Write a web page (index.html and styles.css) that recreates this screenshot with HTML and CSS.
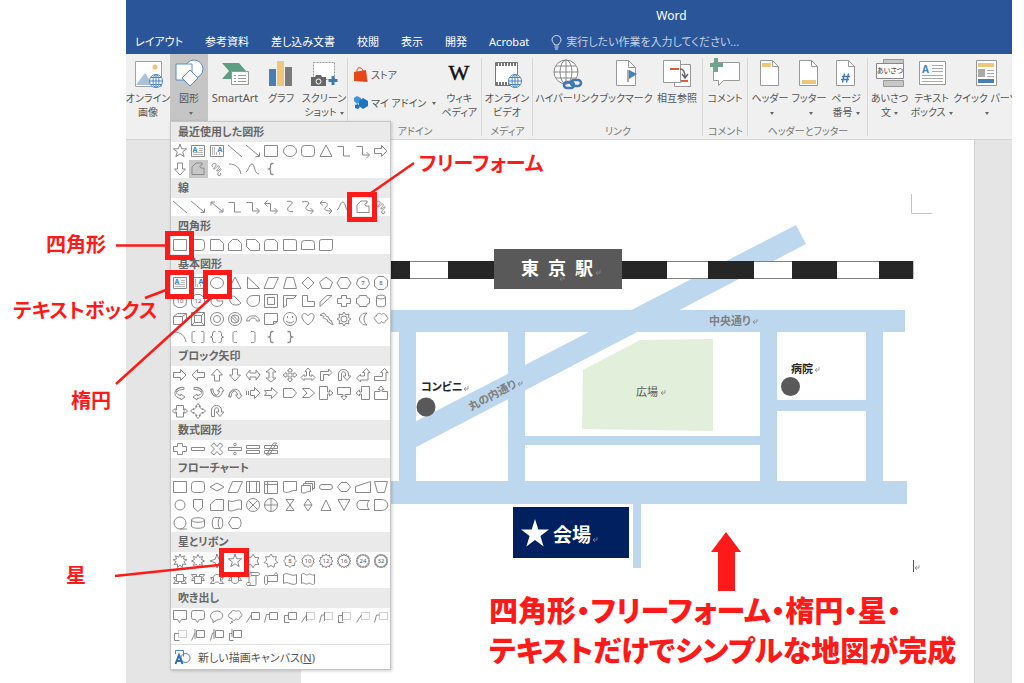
FILE: index.html
```html
<!DOCTYPE html>
<html lang="ja">
<head>
    <meta charset="UTF-8">
    <meta name="viewport" content="width=device-width, initial-scale=1.0">
    <title>Word</title>
    <link rel="stylesheet" href="styles.css">
</head>
<body>
    <div class="stage">
        <div class="word">
            <header class="titlebar">
                <div class="title">Word</div>
                <nav class="tabs">
                    <button class="tab">レイアウト</button>
                    <button class="tab">参考資料</button>
                    <button class="tab">差し込み文書</button>
                    <button class="tab">校閲</button>
                    <button class="tab">表示</button>
                    <button class="tab">開発</button>
                    <button class="tab">Acrobat</button>
                    <button class="tab tell-me">
                        <svg width="11" height="15" viewBox="0 0 11 15" fill="none" stroke="#dfe8f5"><path d="M3.5 10C3.5 8 1 7.500 1 4.800a4.500 4.300 0 0 1 9 0C10 7.500 7.500 8 7.500 10zM3.500 12h4M4 14h3"/></svg>
                        <span>実行したい作業を入力してください...</span>
                    </button>
                </nav>
            </header>

            <div class="ribbon">
                <section class="group">
                    <div class="tools">
                        <button class="tool w44">
                            <svg width="32" height="32" viewBox="0 0 32 32"><path d="M3.500 3.500h26v25h-26z" fill="#fff" stroke="#a0a0a0"/><circle cx="23" cy="9" r="2.500" fill="#eec07c"/><path d="M4 27l9-12 8 12z" fill="#a9c2da"/><g fill="#fff" stroke="#4a86c0"><circle cx="24" cy="23" r="6.500"/><ellipse cx="24" cy="23" rx="3" ry="6.500"/><path d="M17.500 23h13M19 19.500h10M19 26.500h10M24 16.500v13"/></g></svg>
                            <span>オンライン<br>画像</span>
                        </button>
                        <button class="tool w38 open">
                            <svg width="32" height="32" viewBox="0 0 32 32" fill="#fff" stroke="#5b8dc4"><circle cx="21" cy="11" r="9"/><path d="M3 6h16v16H3z"/><path d="M17 12l8 8-8 8-8-8z"/></svg>
                            <span>図形<br><i class="caret"></i></span>
                        </button>
                        <button class="tool w54">
                            <svg width="32" height="32" viewBox="0 0 32 32"><path d="M3 5h17l7 8-7 8H3l7-8z" fill="#5e9c84"/><path d="M12.500 13.500h17v13h-17z" fill="#fff" stroke="#999"/><path d="M15 17.500h2m2 0h8m-12 3h2m2 0h8m-12 3h2m2 0h8" stroke="#999"/></svg>
                            <span class="latin">SmartArt</span>
                        </button>
                        <button class="tool w38">
                            <svg width="32" height="32" viewBox="0 0 32 32"><path d="M4 11h7v17H4z" fill="#4a7fb5"/><path d="M12 3h7v25h-7z" fill="#efc77b"/><path d="M20 9h7v19h-7z" fill="#7b7b7b"/></svg>
                            <span>グラフ</span>
                        </button>
                        <button class="tool w48">
                            <svg width="32" height="32" viewBox="0 0 32 32"><path d="M5.500 4.500h21v17h-21z" fill="#fff" stroke="#999" stroke-dasharray="2 1"/><path d="M3 19h4l1-2h5l1 2h4v9H3z" fill="#666"/><circle cx="10.500" cy="23.500" r="2.500" fill="#666" stroke="#fff"/><path d="M25 18v9m-4.500-4.500h9" stroke="#3f78b5" stroke-width="3"/></svg>
                            <span>スクリーン<br>ショット<i class="caret"></i></span>
                        </button>
                    </div>
                    <div class="group-label"></div>
                </section>

                <section class="group">
                    <div class="tools">
                        <div class="stack">
                            <button class="mini"><svg width="14" height="16" viewBox="0 0 14 16"><path d="M0 5l12-2 1.500 12-13.500-1z" fill="#e8451a"/><path d="M3 5c-1-5 5-6 6-1" fill="none" stroke="#e8451a"/></svg>ストア</button>
                            <button class="mini"><svg width="14" height="16" viewBox="0 0 14 16"><path d="M3 1l4 2v4L3 9 0 6V3z" fill="#3f96d8"/><path d="M9 3l5 3v5l-5 3-4-3V6z" fill="#1d74bf"/><path d="M1 10l3-1 2 3-2 2-3-1z" fill="#1d74bf"/></svg>マイ アドイン<i class="caret"></i></button>
                        </div>
                        <button class="tool w46">
                            <svg width="32" height="32" viewBox="0 0 32 32"><text x="16" y="22" text-anchor="middle" class="wiki">W</text></svg>
                            <span>ウィキ<br>ペディア</span>
                        </button>
                    </div>
                    <div class="group-label">アドイン</div>
                </section>

                <section class="group">
                    <div class="tools">
                        <button class="tool w50">
                            <svg width="32" height="32" viewBox="0 0 32 32"><path d="M4.500 4.500h22v23h-22z" fill="#fff" stroke="#777"/><path d="M5 6.500h21M5 25.500h21" stroke="#777" stroke-width="3" stroke-dasharray="2 1"/><g fill="#fff" stroke="#4a86c0"><circle cx="24" cy="23" r="6.500"/><ellipse cx="24" cy="23" rx="3" ry="6.500"/><path d="M17.500 23h13M19 19.500h10M19 26.500h10M24 16.500v13"/></g></svg>
                            <span>オンライン<br>ビデオ</span>
                        </button>
                    </div>
                    <div class="group-label">メディア</div>
                </section>

                <section class="group">
                    <div class="tools">
                        <button class="tool w68">
                            <svg width="32" height="32" viewBox="0 0 32 32" fill="none"><g stroke="#888"><circle cx="15" cy="14" r="12" fill="#fff"/><ellipse cx="15" cy="14" rx="6" ry="12"/><path d="M3 14h24M5 8h20M5 20h20M15 2v24"/></g><g stroke="#3f78b5" stroke-width="2.500"><rect x="13" y="24" width="10" height="6" rx="3"/><rect x="20" y="22" width="10" height="6" rx="3"/></g></svg>
                            <span>ハイパーリンク</span>
                        </button>
                        <button class="tool w50">
                            <svg width="32" height="32" viewBox="0 0 32 32"><path d="M6.500 2.500h12l7 7v18h-19z" fill="#fff" stroke="#999"/><path d="M18.500 2.500v7h7" fill="none" stroke="#999"/><path d="M18 12v12" stroke="#555"/><path d="M19 12l8 4-8 5z" fill="#3f85c6"/></svg>
                            <span>ブックマーク</span>
                        </button>
                        <button class="tool w52">
                            <svg width="32" height="32" viewBox="0 0 32 32"><path d="M13.500 6.500h16v22h-16z" fill="#fff" stroke="#999"/><path d="M2.500 2.500h17v22h-17z" fill="#fff" stroke="#999"/><path d="M9 11h9M20 23h7" stroke="#e25a3a" stroke-width="2"/><path d="M19 11c4 0 5 3 5 8m-3-3l3 4 3-4" fill="none" stroke="#666" stroke-width="1.500"/></svg>
                            <span>相互参照</span>
                        </button>
                    </div>
                    <div class="group-label">リンク</div>
                </section>

                <section class="group">
                    <div class="tools">
                        <button class="tool w44">
                            <svg width="32" height="32" viewBox="0 0 32 32"><path d="M4.500 4.500h26v18h-16l-5 5v-5h-5z" fill="#fff" stroke="#999"/><path d="M7 0v14M1 7h13" stroke="#6ea38e" stroke-width="4"/></svg>
                            <span>コメント</span>
                        </button>
                    </div>
                    <div class="group-label">コメント</div>
                </section>

                <section class="group">
                    <div class="tools">
                        <button class="tool w44">
                            <svg width="32" height="32" viewBox="0 0 32 32"><path d="M6.500 2.500h12l6 6v19h-18z" fill="#fff" stroke="#999"/><path d="M18.500 2.500v6h6" fill="none" stroke="#999"/><path d="M8 5h9v4H8z" fill="#efc77b"/></svg>
                            <span>ヘッダー<br><i class="caret"></i></span>
                        </button>
                        <button class="tool w34">
                            <svg width="32" height="32" viewBox="0 0 32 32"><path d="M6.500 2.500h12l6 6v19h-18z" fill="#fff" stroke="#999"/><path d="M18.500 2.500v6h6" fill="none" stroke="#999"/><path d="M9 22h14v4H9z" fill="#efc77b"/></svg>
                            <span>フッター<br><i class="caret"></i></span>
                        </button>
                        <button class="tool w40">
                            <svg width="32" height="32" viewBox="0 0 32 32"><path d="M6.500 2.500h12l6 6v19h-18z" fill="#fff" stroke="#999"/><path d="M18.500 2.500v6h6" fill="none" stroke="#999"/><path d="M14.500 15.500l-2 9m6-9l-2 9m-4.500-6h8m-9 3h8" stroke="#3f78b5" stroke-width="1.300" fill="none"/></svg>
                            <span>ページ<br>番号<i class="caret"></i></span>
                        </button>
                    </div>
                    <div class="group-label">ヘッダーとフッター</div>
                </section>

                <section class="group clipped">
                    <div class="tools">
                        <button class="tool w43">
                            <svg width="32" height="32" viewBox="0 0 32 32"><path d="M9.500 1.500h20v6h-20zM9.500 22.500h20v6h-20z" fill="#c8c8c8" stroke="#999"/><path d="M2.500 5.500h27v15h-27z" fill="#fff" stroke="#888"/><text x="16" y="15" text-anchor="middle" class="icon-text">あいさつ</text></svg>
                            <span>あいさつ<br>文<i class="caret"></i></span>
                        </button>
                        <button class="tool w41">
                            <svg width="32" height="32" viewBox="0 0 32 32"><path d="M3.500 3.500h26v23h-26z" fill="#fff" stroke="#999"/><text x="6" y="15" class="icon-a">A</text><path d="M16 7.500h11m-11 3h11m-11 3h11M6 17.500h21M6 20.500h21M6 23.500h21" stroke="#aaa"/></svg>
                            <span>テキスト<br>ボックス<i class="caret"></i></span>
                        </button>
                        <button class="tool w68">
                            <svg width="32" height="32" viewBox="0 0 32 32"><path d="M6.500 2.500h20v25h-20z" fill="#fff" stroke="#999"/><path d="M8 5h16v4H8z" fill="#efc77b"/><path d="M8 11h7v8H8z" fill="#aaa"/><path d="M17 12.500h7m-7 3h7m-7 3h7" stroke="#aaa"/><path d="M8 21h16v4H8z" fill="#4a7fb5"/></svg>
                            <span>クイック パーツ<br><i class="caret"></i></span>
                        </button>
                    </div>
                    <div class="group-label">テキスト</div>
                </section>

                <div class="shape-menu">
                    <div id="shapeSections"></div>
                    <button class="new-canvas">
                        <svg width="17" height="16" viewBox="0 0 17 16" fill="none" stroke="#4a86c0"><path d="M1.500 5V1.500h8v6"/><circle cx="11.500" cy="9" r="4.500"/><path d="M1.500 15l3.500-9 3.500 9M3 12h4" stroke="#2f6db3" stroke-width="2"/></svg>
                        <span>新しい描画キャンバス(<u>N</u>)</span>
                    </button>
                </div>
            </div>

            <main class="workspace">
                <div class="page">
                    <svg class="map" viewBox="301 140 673 543">
                        <defs>
                            <path id="ret" d="M5 0v3H1M3 1L1 3l2 2" fill="none" stroke="#888" stroke-width=".8"/>
                        </defs>
                        <!-- roads -->
                        <g fill="#bdd7ee">
                            <path d="M399 430l397-205 10 19-407 212z"/>
                            <path d="M380 310h525v22H380zM380 481h527v23H380z"/>
                            <path d="M399 330h17v152h-17zM508 330h17v152h-17zM760 330h17v152h-17zM866 330h17v152h-17z"/>
                            <path d="M525 436h235v9H525zM777 400h89v11h-89zM633 503h8v65h-8z"/>
                        </g>
                        <path d="M640 340l73-1v92l-131-2 1-59z" fill="#e2efda"/>
                        <!-- railway -->
                        <path d="M380 261.500h533v17H380z" fill="#fff" stroke="#7f7f7f"/>
                        <path d="M380 261h30v18h-30zM448 261h50v18h-50zM621 261h46v18h-46zM708 261h46v18h-46zM792 261h45v18h-45zM879 261h34v18h-34z" fill="#262626"/>
                        <path d="M494 249h128v40H494z" fill="#595959"/>
                        <text x="521" y="275" class="station">東&ensp;京&ensp;駅</text>
                        <use href="#ret" x="595" y="270"/>
                        <use href="#ret" x="559" y="276"/>
                        <!-- places -->
                        <text x="421" y="391" class="place">コンビニ</text>
                        <use href="#ret" x="463" y="386"/>
                        <circle cx="426" cy="407" r="9.500" fill="#595959"/>
                        <text x="791" y="373" class="place">病院</text>
                        <use href="#ret" x="814" y="367"/>
                        <circle cx="790.500" cy="386.500" r="9.500" fill="#595959"/>
                        <text x="709" y="325" class="road">中央通り</text>
                        <use href="#ret" x="752" y="319"/>
                        <text x="471" y="411" class="road" transform="rotate(-28 471 411)">丸の内通り</text>
                        <use href="#ret" x="517" y="381"/>
                        <text x="636" y="396" class="park">広場</text>
                        <use href="#ret" x="660" y="390"/>
                        <path d="M513 507h116v51H513z" fill="#002060"/>
                        <path d="M535 519l3.300 10.400h10.700l-8.600 6.600 3.200 10.500-8.600-6.400-8.600 6.400 3.200-10.500-8.600-6.600h10.700z" fill="#fff"/>
                        <text x="553" y="542" class="venue">会場</text>
                        <use href="#ret" x="592" y="537"/>
                        <!-- page corner and cursor -->
                        <path d="M911.500 194v19.500H932" fill="none" stroke="#c4c4c4"/>
                        <path d="M913.500 560v12" stroke="#555"/>
                        <use href="#ret" x="914" y="565"/>
                    </svg>
                </div>
            </main>
        </div>

        <svg class="marks" width="1024" height="683" viewBox="0 0 1024 683">
            <g fill="none" stroke="#ff1a1a" stroke-width="5">
                <path d="M167.500 233.500h24v24h-24zM167.500 272.500h24v24h-24zM205.500 272.500h24v24h-24zM349.500 194.500h25v25h-25zM221.500 550.500h25v24h-25z"/>
            </g>
            <path d="M116 245.500h50M145 298l21-8M116 384l96-87M371 193l43-30M115 576l104-11" stroke="#ff1a1a" stroke-width="2.500" fill="none"/>
            <path d="M726 532l15 20h-6v39h-17v-39h-7z" fill="#ff1a1a"/>
        </svg>
        <span class="note note-rect">四角形</span>
        <span class="note note-textbox">テキストボックス</span>
        <span class="note note-ellipse">楕円</span>
        <span class="note note-star">星</span>
        <span class="note note-freeform">フリーフォーム</span>
        <p class="caption">四角形・フリーフォーム・楕円・星・<br>テキストだけでシンプルな地図が完成</p>
    </div>

    <script src="script.js"></script>
</body>
</html>
```

FILE: styles.css
```css
* {
    box-sizing: border-box;
}
body {
    margin: 0;
    background-color: #fff;
    font-family: "Noto Sans", "Noto Sans CJK JP", sans-serif;
    font-size: 11px;
    font-feature-settings: "palt";
    color: #555;
}
button {
    margin: 0;
    padding: 0;
    border: none;
    background: none;
    font: inherit;
    font-feature-settings: inherit;
    color: inherit;
    cursor: pointer;
}
.stage {
    position: relative;
    min-height: 100vh;
    padding: 0 12px 0 126px;
    overflow: hidden;
}
.word {
    display: flex;
    flex-direction: column;
    min-height: 100vh;
}

/* title bar */
.titlebar {
    height: 54px;
    background-color: #2a5699;
    color: #fff;
}
.title {
    padding: 6px 0 0 205px;
    text-align: center;
    font-size: 12px;
    line-height: 20px;
}
.tabs {
    display: flex;
    gap: 22px;
    padding: 6px 0 0 9px;
    line-height: 20px;
}
.tab {
    white-space: nowrap;
}
.tell-me {
    display: flex;
    align-items: center;
    gap: 4px;
    color: #c3d2e8;
}

/* ribbon */
.ribbon {
    position: relative;
    display: grid;
    grid-template-columns: 222fr 134fr 51fr 170fr 45fr 120fr 144fr;
    height: 86px;
    background-color: #f0f0f0;
    border-bottom: 1px solid #d4d4d4;
}
.group {
    display: flex;
    flex-direction: column;
    justify-content: space-between;
    min-width: 0;
    background: linear-gradient(#d8d8d8, #d8d8d8) right 4px / 1px 78px no-repeat;
}
.clipped {
    overflow: hidden;
    background: none;
}
.clipped .group-label {
    min-width: 322px;
}
.tools {
    display: flex;
    height: 67px;
}
.group-label {
    height: 15px;
    line-height: 14px;
    text-align: center;
    white-space: nowrap;
    font-size: 10px;
    color: #777;
}
.tool {
    display: flex;
    flex-direction: column;
    align-items: center;
    flex: none;
    padding-top: 4px;
    font-size: 10px;
    line-height: 14px;
    white-space: nowrap;
}
.tool svg {
    flex: none;
    margin-bottom: 1px;
}
.mini svg {
    flex: none;
}
.tool.open {
    background-color: #c5c5c5;
}
.w34 { width: 34px; }
.w38 { width: 38px; }
.w40 { width: 40px; }
.w41 { width: 41px; }
.w43 { width: 43px; }
.w44 { width: 44px; }
.w46 { width: 46px; }
.w48 { width: 48px; }
.w50 { width: 50px; }
.w52 { width: 52px; }
.w54 { width: 54px; }
.w68 { width: 68px; }
.latin {
    font-size: 11px;
}
.caret {
    display: inline-block;
    margin-left: 3px;
    border: 2px solid transparent;
    border-top: 3px solid #666;
    border-bottom: none;
    vertical-align: middle;
}
.stack {
    display: flex;
    flex-direction: column;
    gap: 12px;
    flex: 1;
    padding: 13px 0 0 6px;
}
.mini {
    display: flex;
    align-items: center;
    gap: 3px;
    font-size: 10px;
    line-height: 16px;
    white-space: nowrap;
}
.wiki {
    font: 22px "Liberation Serif", serif;
    fill: #111;
    stroke: #111;
    stroke-width: 0.5;
}
.icon-text {
    font-size: 7px;
    fill: #333;
}
.icon-a {
    font-size: 10px;
    font-weight: bold;
    fill: #3f85c6;
}

/* shape gallery */
.shape-menu {
    position: absolute;
    left: 44px;
    top: 67px;
    z-index: 2;
    width: 221px;
    background-color: #fff;
    border: 1px solid #c6c6c6;
    box-shadow: 1px 1px 3px rgba(0, 0, 0, 0.2);
}
.shape-menu h2 {
    margin: 0;
    padding-left: 7px;
    background-color: #eaeaea;
    font-size: 11px;
    line-height: 20px;
    color: #666;
}
.shapes {
    display: grid;
    grid-template-columns: repeat(12, 1fr);
    grid-auto-rows: 18px;
}
.shape {
    display: flex;
    align-items: center;
    justify-content: center;
}
.shape svg {
    width: 16px;
    height: 16px;
    fill: none;
    stroke: #8a8a8a;
    overflow: visible;
}
.shape text {
    font-size: 6px;
    fill: #555;
    stroke: none;
    text-anchor: middle;
}
.shape .letter {
    font-size: 7px;
    font-weight: bold;
    fill: #3f85c6;
}
.shape.selected {
    background-color: #c8c8c8;
}
.new-canvas {
    display: flex;
    align-items: center;
    gap: 7px;
    width: 100%;
    height: 25px;
    padding-left: 3px;
    border-top: 1px solid #e2e2e2;
}

/* document */
.workspace {
    flex: 1;
    padding: 0 37px 0 175px;
    background-color: #e5e5e5;
}
.page {
    height: 100%;
    background-color: #fff;
    border-right: 1px solid #cfcfcf;
}
.map {
    display: block;
    width: 100%;
}
.map text {
    font-size: 11px;
    font-weight: bold;
}
.map .station {
    font-size: 18px;
    fill: #fff;
}
.map .venue {
    font-size: 19px;
    fill: #fff;
}
.map .place {
    fill: #262626;
}
.map .road {
    fill: #7f7f7f;
}
.map .park {
    font-weight: normal;
    fill: #595959;
}

/* notes over the window */
.marks,
.note,
.caption {
    position: absolute;
    z-index: 3;
    pointer-events: none;
}
.marks {
    left: 0;
    top: 0;
}
.note {
    font-size: 20px;
    font-weight: bold;
    line-height: 30px;
    white-space: nowrap;
    color: #ff1a1a;
}
.note-rect {
    left: 46px;
    top: 230px;
}
.note-textbox {
    left: 13px;
    top: 296px;
}
.note-ellipse {
    left: 71px;
    top: 386px;
}
.note-star {
    left: 66px;
    top: 561px;
}
.note-freeform {
    left: 419px;
    top: 149px;
}
.caption {
    left: 489px;
    top: 591px;
    margin: 0;
    font-size: 29px;
    font-weight: 900;
    line-height: 40px;
    white-space: nowrap;
    color: #ff1a1a;
}
```

FILE: script.js
```javascript
// points around a circle, alternating between two radii
function burst(n, outer, inner) {
    let points = [];
    for (let i = 0; i < n * 2; i++) {
        let r = i % 2 ? inner : outer;
        let a = Math.PI * i / n - Math.PI / 2;
        points.push((8 + r * Math.cos(a)).toFixed(2) + ' ' + (8 + r * Math.sin(a)).toFixed(2));
    }
    return 'M' + points.join('L') + 'z';
}

function label(d, text) {
    return '<path d="' + d + '"/><text x="8" y="10.2">' + text + '</text>';
}

const page = '<path d="M1.5 2.5h13v11h-13z"/>';

const shapes = {
    star5: burst(5, 7, 2.8),
    textbox: page + '<path d="M9 5.500h4M9 7.500h4M3 9.500h10M3 11.500h10" opacity=".6"/><text class="letter" x="5" y="8.500">A</text>',
    vtextbox: page + '<path d="M3.500 4v8M5.500 4v8M7.500 9v3M10.500 9v3" opacity=".6"/><text class="letter" x="11" y="8.500">A</text>',
    line: 'M1 2l14 12',
    arrow: 'M1 2l13 11M14.500 9.500v4h-4',
    dblArrow: 'M2 3l12 10M14 9.500V13h-4M2 6.500V3h4',
    rect: 'M1.500 2.500h13v11h-13z',
    ellipse: '<ellipse cx="8" cy="8" rx="6.500" ry="5.500"/>',
    roundRect: '<rect x="1.500" y="2.500" width="13" height="11" rx="3"/>',
    triangle: 'M8 2l6 11.500H2z',
    elbow: 'M1.500 3.500h6v9.500h6.500',
    elbowArrow: 'M1.500 3.500h6v8.500h6.500M11.500 9l3 3-3 3',
    elbowDbl: 'M2 4.500h5.500v7.500h6.500M11.500 9l3 3-3 3M4.500 1.500l-3 3 3 3',
    rightArrow: 'M1.500 5.500h7v-3L14 8l-5.500 5.500v-3h-7z',
    leftArrow: 'M14.500 5.500h-7v-3L2 8l5.500 5.500v-3h7z',
    upArrow: 'M5.500 14V8h-3L8 2l5.500 6h-3v6z',
    downArrow: 'M5.500 2v6h-3L8 14l5.500-6h-3V2z',
    freeform: 'M2 13.500V6l4-4h6v2c-4 1-2 4 2 3v6.500z',
    scribble: 'M4 6c-3-2 2-5 3-3S3 8 5 8s3-4 5-3-4 5-2 5 3-3 4-2-5 4-3 6 4-1 2-2',
    arc: 'M2 3c7 0 11 4 12 10',
    curve: 'M1 11C4 9 4 3 7 3s2 10 7 10',
    curveC: 'M5 2.500c5-1 7 1 3 4s-3 7 3 6',
    curveArrow: 'M2 3c7-2 8 1 5 4s0 5 6 5M10.500 9l3 3-3 3',
    curveDbl: 'M2 4c7-2 9 1 6 4s0 4 5 4M11 9l3 3-3 3M4.500 1.500L2 4l3 2.500',
    snip1: 'M1.500 2.500h9l4 4v7h-13z',
    snip2: 'M1.500 13.500v-7l4-4h5l4 4v7z',
    snipDiag: 'M1.500 2.500h9l4 4v7h-9l-4-4z',
    snipRound: 'M1.500 13.500v-8q0-3 3-3h7l3 3v8z',
    round1: 'M1.500 2.500h11q2 0 2 2v9h-13z',
    round2: 'M1.500 12.500v-6q0-3 3-3h7q3 0 3 3v6z',
    roundDiag: 'M3.500 2.500h11v9q0 2-2 2h-11v-9q0-2 2-2z',
    rtTriangle: 'M2.500 2v11.500h12z',
    parallelogram: 'M5.500 2.500h10l-5 11H1z',
    trapezoid: 'M4.500 2.500h7l3 11h-13z',
    diamond: 'M8 2l6 6-6 6-6-6z',
    pentagon: 'M8 2l6.500 5-2.500 6.500H4L1.500 7z',
    hexagon: 'M4.500 2.500h7L15 8l-3.500 5.500h-7L1 8z',
    n7: label('M8 1.500l5 2.500 1.500 5-3.500 4.500H5L1.500 9 3 4z', '7'),
    n8: label('M5 1.500h6l3.500 3.500v6L11 14.500H5L1.500 11V5z', '8'),
    n10: label('M6 1.500h4l4 3 .5 3.500-.5 4-4 2.500H6L2 12 1.500 8 2 4.500z', '10'),
    n12: label('M6 1.500h4l3 2 1.500 3v4l-2 3-3 1.500h-4l-3-2-1-3v-4l1.500-3z', '12'),
    pie: 'M8 8V2.500A6 5.500 0 1 0 14 8z',
    chord: 'M4 4a6 5 0 1 0 10 6L7 3C6 3 5 3 4 4z',
    teardrop: 'M8 2.500h6.500V8A6.300 5.500 0 1 1 8 2.500z',
    frame: 'M1.500 1.500h13v13h-13zM4.500 4.500h7v7h-7z',
    halfFrame: 'M1.500 2.500h13l-3 3h-7v7l-3 2z',
    lShape: 'M2.500 2.500h5v6h7v5h-12z',
    stripe: 'M2 9l7-6.500h5L2 13.500z',
    cross: 'M5.500 2.500h5v3h4v5h-4v3h-5v-3h-4v-5h4z',
    plaque: 'M4.500 2.500h7a3 3 0 0 0 3 3v5a3 3 0 0 0-3 3h-7a3 3 0 0 0-3-3v-5a3 3 0 0 0 3-3z',
    cylinder: 'M3.500 4v8c0 2.500 9 2.500 9 0V4c0-2.500-9-2.500-9 0zc0 2.500 9 2.500 9 0',
    cube: 'M1.500 5.500h9v8h-9zM1.500 5.500l4-3h9l-4 3M14.500 2.500v8l-4 3',
    bevel: 'M1.500 1.500h13v13h-13zM4.500 4.500h7v7h-7zM1.500 1.500l3 3M14.500 1.500l-3 3M1.500 14.500l3-3M14.500 14.500l-3-3',
    donut: '<circle cx="8" cy="8" r="6.500"/><circle cx="8" cy="8" r="3.500"/>',
    noSymbol: '<circle cx="8" cy="8" r="6.500"/><circle cx="8" cy="8" r="4"/><path d="M4.500 6l5.500 5.500M6 4.500l5.500 5.500"/>',
    blockArc: 'M1.500 10c0-7 13-7 13 0h-3c0-4-7-4-7 0z',
    folded: 'M1.500 2.500h13v8l-4 3h-9zM10.500 13.500v-3h4',
    smiley: '<circle cx="8" cy="8" r="6.500"/><path d="M5.500 5v2M10.500 5v2M4 10q4 4 8 0"/>',
    heart: 'M8 14C0 8 1 2.500 4.500 2.500 7 2.500 8 5 8 5s1-2.500 3.500-2.500C15 2.500 16 8 8 14z',
    lightning: 'M2 4l4-2 3 4 1-.5 2 4 1-.5 2 5-6-4 1-.5-5-3 1-1z',
    sun: '<circle cx="8" cy="8" r="3"/><path d="' + burst(8, 7, 4.500) + '"/>',
    moon: 'M12 2C2 2 2 14 12 14 8 11 8 5 12 2z',
    cloud: 'M3 9.500C0 8 1 5 3.500 5c0-3 4-3 5-1.500C10.500 1.500 13 3 13 5c3 1 2 4-.5 4.500 0 3-3 3-4 1-1 3-5 2-5.500-1z',
    bracketPair: 'M5 2.500c-3 0-3 0-3 3v5c0 3 0 3 3 3M11 2.500c3 0 3 0 3 3v5c0 3 0 3-3 3',
    bracePair: 'M6.500 2.500h-1q-2 0-2 2V7L1.500 8l2 1v2.500q0 2 2 2h1M9.500 2.500h1q2 0 2 2V7l2 1-2 1v2.500q0 2-2 2h-1',
    leftBracket: 'M10 2.500c-4 0-4 0-4 3v5c0 3 0 3 4 3',
    rightBracket: 'M6 2.500c4 0 4 0 4 3v5c0 3 0 3-4 3',
    leftBrace: '<path stroke-width="1.300" d="M10.500 2.500h-1q-2 0-2 2V7l-2 1 2 1v2.500q0 2 2 2h1"/>',
    rightBrace: '<path stroke-width="1.300" d="M5.500 2.500h1q2 0 2 2V7l2 1-2 1v2.500q0 2-2 2h-1"/>',
    leftRight: 'M1 8l4-5v3h6V3l4 5-4 5v-3H5v3z',
    upDown: 'M8 1l5 4h-3v6h3l-5 4-5-4h3V5H3z',
    quad: 'M8 1l2.500 3H9v3h3V5.500L15 8l-3 2.500V9H9v3h1.500L8 15l-2.500-3H7V9H4v1.500L1 8l3-2.500V7h3V4H5.500z',
    threeWay: 'M8 1l3 3.500H9.500V9H12V7.500l3 3-3 3V12H4v1.500l-3-3 3-3V9h2.500V4.500H5z',
    bent: 'M2.500 13.500v-9h8V2L14 5.500 10.500 9V7.500h-5v6z',
    uturn: 'M2.500 13.500V7c0-6 10-6 10 0v2H15l-4 4.500L7 9h2.500V7c0-3-4-3-4 0v6.500z',
    leftUp: 'M1.500 11l4-3.500V9h4V5.500H7.500l4-4 3.500 4h-2V13H5.500v2z',
    bentUp: 'M1.500 13.500v-4h8v-4H7.500l4-4 3.500 4h-2v8z',
    curvedRight: 'M12 2.500C3 2 2 10 9 10.500V9l4 3-4 3v-1.500C0 13 1 1 12 2.500zM12 2.500v2C9 4.500 6 5 5 7',
    curvedLeft: 'M4 2.500c9-.5 10 7.500 3 8V9l-4 3 4 3v-1.500c9-.5 8-12.500-3-11zM4 2.500v2c3 0 6 .5 7 2.500',
    curvedUp: 'M2 4c0 8 8 8 8.500 2h-2L12 2l3 4h-1.500C13 14 2 14 2 4zM2 4h2c0 3 1 5 3 6',
    curvedDown: 'M2 12c0-8 8-8 8.500-2h-2l3.500 4 3-4h-1.500C13 2 2 2 2 12zM2 12h2c0-3 1-5 3-6',
    striped: 'M1.500 6v4M3.500 6v4M5.500 5.500h4v-3L15 8l-5.500 5.500v-3h-4z',
    notched: 'M1.500 5.500h7v-3L14.500 8l-6 5.500v-3h-7l2-2.500z',
    homePlate: 'M1.500 3.500h9L14.500 8l-4 4.500h-9z',
    chevron: 'M2.500 3.500h7l5 4.500-5 4.500h-7L7 8z',
    rightCall: 'M1.500 1.500h8V7h2V5l3.500 3-3.500 3V9h-2v5.500h-8z',
    downCall: 'M1.500 2.500h13v7H9v2h2L8 15l-3-3.500h2v-2H1.500z',
    leftCall: 'M14.500 1.500h-8V7h-2V5L1 8l3.500 3V9h2v5.500h8z',
    upCall: 'M1.500 14.500h13v-8H9v-2h2L8 1 5 4.500h2v2H1.500z',
    sideCall: 'M4.500 2.500h7V7H13V5.500L15.500 8 13 10.500V9h-1.500v5h-7V9H3v1.500L.5 8 3 5.500V7h1.500z',
    quadCall: 'M8 .5l2.500 3H9l3.500 3.500V5.500l3 2.500-3 2.500V9L9 12.500h1.500l-2.500 3-2.500-3H7L3.500 9v1.500L.5 8l3-2.500V7L7 3.500H5.500z',
    minus: 'M1.500 6.500h13v3h-13z',
    times: 'M5 2l3 3.500L11 2l3 2.500L10.500 8l3.500 3.500-3 2.500-3-3.500L5 14l-3-2.500L5.500 8 2 4.500z',
    divide: '<path d="M1.500 6.500h13v3h-13z"/><circle cx="8" cy="3.500" r="1.300"/><circle cx="8" cy="12.500" r="1.300"/>',
    equal: 'M1.500 4.500h13v3h-13zM1.500 9.500h13v3h-13z',
    notEqual: 'M1.500 4.500h13v3h-13zM1.500 9.500h13v3h-13zM3.500 14l7-12h3l-7 12z',
    predefined: 'M1.500 2.500h13v11h-13zM4.500 2.500v11M11.500 2.500v11',
    internal: 'M1.500 2.500h13v12h-13zM4.500 2.500v12M1.500 5.500h13',
    doc: 'M1.500 2.500h13v9c-6-1-7 4-13 1z',
    multiDoc: 'M1.500 6.500h9v6c-4-1-5 3-9 1zM3.500 6.500v-2h9v7M5.500 4.500v-2h9v7h-2',
    terminator: '<rect x="1.500" y="5.500" width="13" height="5" rx="2.500"/>',
    prep: 'M5 3.500h6L14.500 8 11 12.500H5L1.500 8z',
    flatDiamond: 'M8 4l7 4-7 4-7-4z',
    manualInput: 'M.5 7.500l15-5v11H.5z',
    manualOp: 'M1.500 2.500h13l-3 11h-7z',
    connector: '<circle cx="8" cy="8" r="5"/>',
    offpage: 'M3.500 2.500h9v8l-4.500 4-4.500-4z',
    card: 'M1.500 7l5-4.500h8v11h-13z',
    tape: 'M1.500 3.500c5 3 8-2 13 0v9c-5-2-8 3-13 1z',
    summing: '<circle cx="8" cy="8" r="6.500"/><path d="M3.500 3.500l9 9M12.500 3.500l-9 9"/>',
    or: '<circle cx="8" cy="8" r="6.500"/><path d="M8 1.500v13M1.500 8h13"/>',
    collate: 'M4 2.500h8l-8 11h8z',
    sort: 'M8 2l4 6-4 6-4-6zM4 8h8',
    extract: 'M8 3l5 10.500H3z',
    merge: 'M2 2.500h12L8 13.500z',
    stored: 'M5 3.500h9.500c-3 2-3 7 0 9H5c-4 0-4-9 0-9z',
    delay: 'M1.500 2.500H8c9 0 9 11 0 11H1.500z',
    seq: '<circle cx="8" cy="8" r="6"/><path d="M8 14h7"/>',
    disk: 'M1.500 5v6c0 3 13 3 13 0V5c0-3-13-3-13 0zc0 3 13 3 13 0',
    direct: 'M5.500 2.500h6c3 0 3 11 0 11h-6c-3 0-3-11 0-11zM11.500 2.500c-3 0-3 11 0 11',
    display: 'M1.500 8L5 2.500h6c4 1 4 10 0 11H5z',
    burst1: burst(9, 7, 4),
    burst2: burst(8, 6.500, 3.800),
    star4: burst(4, 7, 2.500),
    star6: burst(6, 6.800, 4),
    star7: burst(7, 7, 4.500),
    s8: label(burst(8, 6.500, 5), '8'),
    s10: label(burst(10, 6.500, 5.300), '10'),
    s12: label(burst(12, 7, 5.300), '12'),
    s16: label(burst(16, 7, 5.300), '16'),
    s24: label(burst(20, 7, 5.300), '24'),
    s32: label(burst(24, 7, 5.300), '32'),
    ribbon1: 'M1.500 12.500l2-3-2-3h3v-3h7v3h3l-2 3 2 3h-5v-2h-3v2zM4.500 6.500v4h7v-4',
    ribbon2: 'M1.500 3.500h5v2h3v-2h5l-2 3 2 3h-3v3h-7v-3h-3l2-3zM4.500 9.500v-4h7v4',
    ribbon3: 'M1.500 12.500l2-3-2-3h3c0-4 7-4 7 0h3l-2 3 2 3h-4c0-2-5-2-5 0zM4.500 6.500v4M11.500 6.500v4',
    ribbon4: 'M1.500 3.500h4c0 2 5 2 5 0h4l-2 3 2 3h-3c0 4-7 4-7 0h-3l2-3zM4.500 9.500v-4M11.500 9.500v-4',
    vScroll: 'M5 1.500h8c2 0 2 3 0 3h-2v9c0 1-1 1-2 1H3c-2 0-2-3 0-3h1v-8c0-3 3-2 2 1h5M4 11.500c2 0 2 2 0 3',
    hScroll: 'M1.500 6c0-2 3-2 3 0v6c0 2-3 2-3 0zM4.500 4.500h7v-1c0-2 3-2 3 0v7h-10M11.500 4.500h3',
    wave: 'M1.500 3.500c5-3 8 3 13 0v9c-5 3-8-3-13 0z',
    wave2: 'M1.500 3.500c3-3 4 2 6.500 0s4 2 6.500 0v9c-3 3-4-2-6.500 0s-4-2-6.500 0z',
    callRect: 'M1.500 1.500h13v9h-5l-2 3-2-3h-4z',
    callRound: 'M3.500 1.500h9q2 0 2 2v5q0 2-2 2h-3l-2 3-2-3h-2q-2 0-2-2v-5q0-2 2-2z',
    callOval: 'M4 11C-1 8 2 2 8 2s9 8 0 9l-4 2.500z',
    callCloud: 'M3 9C0 7 2 4 4 4c0-3 4-3 5-1.500C11 1 14 2 13.500 4c2 1 2 4-.5 4 0 3-3 3-4 1.500-1 3-4 2-4 0zM4.500 12.500h1v1h-1zM3 14.500h1',
    line1: 'M6.500 3.500h8v7h-8zM6.500 5.500l-5 8',
    line2: 'M6.500 3.500h8v7h-8zM6.500 5.500h-3l-2 8',
    line3: 'M6.500 3.500h8v7h-8zM6.500 6.500h-4v7h5',
    dash1: '<path d="M6.500 3.500h8v7h-8z" opacity=".4"/><path d="M6.500 3v9M6.500 6l-5 7.500"/>',
    dash2: '<path d="M6.500 3.500h8v7h-8z" opacity=".4"/><path d="M6.500 3v9M6.500 6h-3l-2 7.500"/>',
    dash3: '<path d="M6.500 3.500h8v7h-8z" opacity=".4"/><path d="M6.500 3v9M6.500 6.500h-4v7h5"/>',
    none1: '<path d="M6.500 3.500h8v7h-8z" opacity=".4"/><path d="M6.500 6l-5 7.500"/>',
    none2: '<path d="M6.500 3.500h8v7h-8z" opacity=".4"/><path d="M6.500 6h-3l-2 7.500"/>',
    none3: '<path d="M6.500 3.500h8v7h-8z" opacity=".4"/><path d="M6.500 6.500h-4v7h5"/>',
    bar1: 'M6.500 3.500h8v7h-8zM5 2v10M5 6l-3.500 7.500',
    bar2: 'M6.500 3.500h8v7h-8zM5 2v10M5 6H3.500l-2 7.500',
    bar3: 'M6.500 3.500h8v7h-8zM5 6.500H2.500v7h4M5 2v8'
};

const sections = [
    ['最近使用した図形', 'star5 textbox vtextbox line arrow rect ellipse roundRect triangle elbow elbowArrow rightArrow downArrow *freeform scribble arc curve leftBrace'],
    ['線', 'line arrow dblArrow elbow elbowArrow elbowDbl curveC curveArrow curveDbl curve freeform scribble'],
    ['四角形', 'rect roundRect snip1 snip2 snipDiag snipRound round1 round2 roundDiag'],
    ['基本図形', 'textbox vtextbox ellipse triangle rtTriangle parallelogram trapezoid diamond pentagon hexagon n7 n8 ' +
        'n10 n12 pie chord teardrop frame halfFrame lShape stripe cross plaque cylinder ' +
        'cube bevel donut noSymbol blockArc folded smiley heart lightning sun moon cloud ' +
        'arc bracketPair bracePair leftBracket rightBracket leftBrace rightBrace'],
    ['ブロック矢印', 'rightArrow leftArrow upArrow downArrow leftRight upDown quad threeWay bent uturn leftUp bentUp ' +
        'curvedRight curvedLeft curvedUp curvedDown striped notched homePlate chevron rightCall downCall leftCall upCall ' +
        'sideCall quadCall uturn'],
    ['数式図形', 'cross minus times divide equal notEqual'],
    ['フローチャート', 'rect roundRect flatDiamond parallelogram predefined internal doc multiDoc terminator prep manualInput manualOp ' +
        'connector offpage card tape summing or collate sort extract merge stored delay ' +
        'seq disk direct display'],
    ['星とリボン', 'burst1 burst2 star4 star5 star6 star7 s8 s10 s12 s16 s24 s32 ' +
        'ribbon1 ribbon2 ribbon3 ribbon4 vScroll hScroll wave wave2'],
    ['吹き出し', 'callRect callRound callOval callCloud line1 line2 line3 dash1 dash2 dash3 none1 none2 ' +
        'none3 bar1 bar2 bar3']
];

let html = '';
sections.forEach(function (section) {
    html += '<h2>' + section[0] + '</h2><div class="shapes">';
    section[1].split(' ').forEach(function (name) {
        let selected = name[0] === '*';
        let shape = shapes[name.replace('*', '')];
        if (shape[0] !== '<') {
            shape = '<path d="' + shape + '"/>';
        }
        html += '<button class="shape' + (selected ? ' selected' : '') + '"><svg viewBox="0 0 16 16">' + shape + '</svg></button>';
    });
    html += '</div>';
});
document.getElementById('shapeSections').innerHTML = html;
```
